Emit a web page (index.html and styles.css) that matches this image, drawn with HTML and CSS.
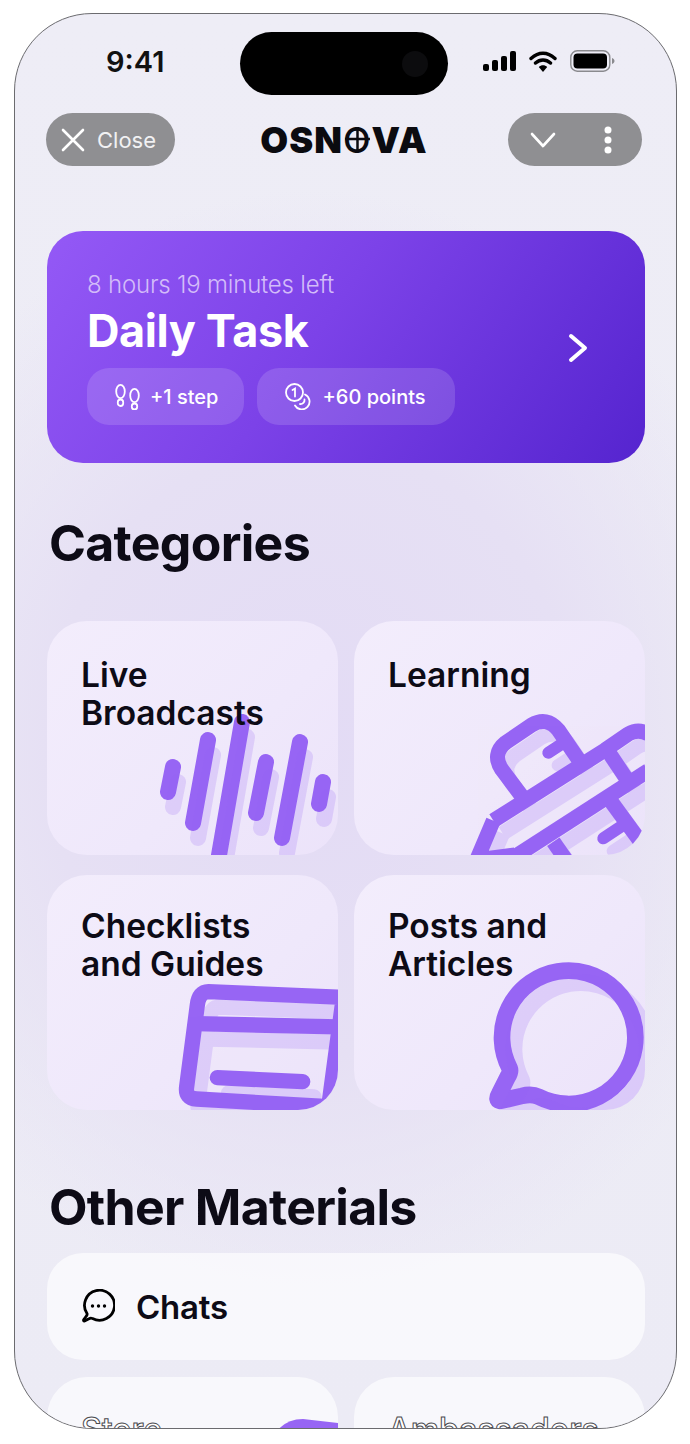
FILE: index.html
```html
<!DOCTYPE html>
<html lang="en">
<head>
    <meta charset="UTF-8">
    <meta name="viewport" content="width=device-width, initial-scale=1.0">
    <title>Osnova</title>
    <link rel="stylesheet" href="styles.css">
</head>
<body>

<div class="phone">
    <div class="status-bar">
        <span class="time">9:41</span>
        <div class="island"><span class="island-lens"></span></div>
        <div class="status-icons">
            <svg width="33" height="20" viewBox="0 0 33 20"><rect x="0" y="13" width="6" height="7" rx="2"/><rect x="9" y="9" width="6" height="11" rx="2"/><rect x="18" y="5" width="6" height="15" rx="2"/><rect x="27" y="0" width="6" height="20" rx="2"/></svg>
            <svg width="28" height="21" viewBox="0 0 28 21"><path d="M2 7.500C9.500 0.500 18.500 0.500 26 7.500M6.500 12C11 8 17 8 21.500 12" fill="none" stroke="#000" stroke-width="3.400" stroke-linecap="round"/><path d="M14 21 9.800 16C12 13.800 16 13.800 18.200 16Z"/></svg>
            <svg width="45" height="22" viewBox="0 0 45 22"><rect x="0.800" y="0.800" width="39" height="20.400" rx="6.500" fill="none" stroke="#8a8a8e" stroke-width="1.400"/><rect x="3.500" y="3.500" width="33.500" height="15" rx="4"/><path d="M42 8v6c1.500-.5 2.500-1.600 2.500-3s-1-2.500-2.500-3Z" fill="#8a8a8e"/></svg>
        </div>
    </div>

    <header class="top-bar">
        <div class="pill-btn close-btn">
            <svg width="24" height="24" viewBox="0 0 24 24"><path d="M2 2 22 22M22 2 2 22" stroke="#fff" stroke-width="2.600" stroke-linecap="round"/></svg>
            <span>Close</span>
        </div>
        <div class="logo">OSN<span class="logo-o">O<svg viewBox="0 0 26 26"><path d="M13 1V25M1 12.500H25" stroke="#0b0b10" stroke-width="2.400"/></svg></span>VA</div>
        <div class="pill-btn menu-btn">
            <svg width="26" height="16" viewBox="0 0 26 16"><path d="M2 2 13 14 24 2" fill="none" stroke="#fff" stroke-width="2.600" stroke-linecap="round" stroke-linejoin="round"/></svg>
            <svg width="10" height="28" viewBox="0 0 10 28"><circle cx="5" cy="4" r="3.500"/><circle cx="5" cy="14" r="3.500"/><circle cx="5" cy="24" r="3.500"/></svg>
        </div>
    </header>

    <section class="task-card">
        <div class="task-info">
            <p class="task-time">8 hours 19 minutes left</p>
            <h1 class="task-title">Daily Task</h1>
            <div class="task-pills">
                <div class="task-pill">
                    <svg width="25" height="26" viewBox="0 0 25 26" fill="none" stroke="#fff" stroke-width="1.800"><ellipse cx="5.500" cy="7.500" rx="4.300" ry="6.600"/><rect x="2.800" y="15.500" width="5.400" height="6.500" rx="2.700"/><ellipse cx="19.500" cy="11.500" rx="4.300" ry="6.600"/><rect x="16.800" y="19.500" width="5.400" height="6" rx="2.700"/></svg>
                    <span>+1 step</span>
                </div>
                <div class="task-pill task-pill-wide">
                    <svg width="27" height="27" viewBox="0 0 27 27" fill="none" stroke="#fff" stroke-width="1.800" stroke-linecap="round"><circle cx="9.500" cy="9.500" r="8.500"/><path d="M7.500 7 10 5.500V13.500"/><path d="M20 11.500A7.800 7.800 0 1 1 10 22.500"/><path d="M19.500 16.500A4 4 0 0 1 15 21"/></svg>
                    <span>+60 points</span>
                </div>
            </div>
        </div>
        <svg class="task-arrow" width="20" height="30" viewBox="0 0 20 30"><path d="M3 3 17 15 3 27" fill="none" stroke="#fff" stroke-width="4" stroke-linecap="round" stroke-linejoin="round"/></svg>
    </section>

    <h2 class="section-title">Categories</h2>
    <div class="cards">
        <div class="cat-card">
            <svg class="cat-art" viewBox="0 0 291 234">
                <path id="bars" d="M126 146 121 171M161 119 146 202M195 101 171 240M219 141 209 192M253 121 235 217M276 161 272 183" fill="none" stroke="#9765f4" stroke-width="16" stroke-linecap="round"/>
                <use href="#bars" x="5" y="15" opacity="0.2"/>
            </svg>
            <h3>Live<br>Broadcasts</h3>
        </div>
        <div class="cat-card">
            <svg class="cat-art" viewBox="27 33 873 702">
                <g id="pencil" fill="none" stroke="#9765f4" stroke-width="45" stroke-linejoin="round" stroke-linecap="butt">
                    <path d="M535 565 470 478Q440 432 482 398L560 345Q605 318 640 360L705 455"/>
                    <path d="M610 428 665 392" stroke-width="36" stroke-linecap="round"/>
                    <path d="M445 632 780 420 850 372Q880 355 910 372"/>
                    <path d="M510 740 910 482"/>
                    <path d="M445 632 395 750 510 735"/>
                    <path d="M790 425 850 515"/>
                    <path d="M795 570 890 700"/>
                    <path d="M625 695 670 760"/>
                    <path d="M775 685 835 645" stroke-width="36" stroke-linecap="round"/>
                </g>
                <use href="#pencil" x="28" y="38" opacity="0.2"/>
            </svg>
            <h3>Learning</h3>
        </div>
        <div class="cat-card cat-card-tall">
            <svg class="cat-art" viewBox="21 30 873 705">
                <g id="sheet" fill="none" stroke="#9765f4" stroke-width="46" stroke-linejoin="round">
                    <path d="M505 380 910 397 866 725 470 702Q435 700 440 665L472 420Q477 380 505 380Z"/>
                    <path d="M470 476 905 486"/>
                    <path d="M532 638 788 650" stroke-linecap="round"/>
                </g>
                <use href="#sheet" x="34" y="46" opacity="0.2"/>
            </svg>
            <h3 class="lifted">Checklists<br>and Guides</h3>
        </div>
        <div class="cat-card cat-card-tall">
            <svg class="cat-art" viewBox="27 30 873 705">
                <path id="bubble" d="M494 610A200 200 0 1 1 580 695Q560 685 530 693L465 708Q452 705 462 688L488 636Q498 620 494 610Z" fill="none" stroke="#9765f4" stroke-width="50" stroke-linejoin="round"/>
                <use href="#bubble" x="36" y="36" opacity="0.2"/>
            </svg>
            <h3 class="lifted">Posts and<br>Articles</h3>
        </div>
    </div>

    <h2 class="section-title other-title">Other Materials</h2>
    <div class="chats-row">
        <svg width="34" height="35" viewBox="0 0 34 35"><path d="M6 24.500A15 15 0 1 1 11.500 29.500Q9.500 28.800 8 29.800L3.500 32Q2 32 2.800 30.500L5 27.500Q6.500 26 6 24.500Z" fill="none" stroke="#000" stroke-width="2.800" stroke-linejoin="round"/><circle cx="11.500" cy="17" r="1.700"/><circle cx="17.500" cy="17" r="1.700"/><circle cx="23.500" cy="17" r="1.700"/></svg>
        <span>Chats</span>
    </div>
    <div class="bottom-cards">
        <div class="bottom-card">
            <svg class="cat-art" viewBox="0 0 291 120"><path d="M226 60Q236 42 256 42L291 46V60Z" fill="#9765f4"/></svg>
            <h3>Store</h3>
        </div>
        <div class="bottom-card">
            <h3>Ambassadors</h3>
        </div>
    </div>
</div>

</body>
</html>
```

FILE: styles.css
```css
* {
    box-sizing: border-box;
}
body {
    margin: 0;
    background: #fff;
    font-family: Inter, "Noto Sans", sans-serif;
    color: #0d0b16;
}
h1, h2, h3, p {
    margin: 0;
}
.phone {
    width: 663px;
    height: 1416px;
    margin: 13px 0 0 14px;
    padding: 0 31px 0 32px;
    border: 1px solid #6b6b6f;
    border-radius: 78px;
    overflow: hidden;
    background: radial-gradient(ellipse 480px 560px at 45% 52%, #e3dbf5 0%, #e6e0f4 55%, rgba(232, 228, 245, 0) 100%), linear-gradient(180deg, #eeedf6 0%, #ecebf5 100%);
}

/* status bar */
.status-bar {
    display: grid;
    grid-template-columns: 1fr 208px 1fr;
    align-items: center;
    height: 63px;
    margin: 18px 4px 0 0;
}
.time {
    padding: 0 0 4px 59px;
    font-size: 29px;
    font-weight: 600;
    color: #111;
}
.island {
    display: flex;
    align-items: center;
    justify-content: flex-end;
    height: 63px;
    padding-right: 20px;
    border-radius: 32px;
    background: #000;
}
.island-lens {
    width: 26px;
    height: 26px;
    border-radius: 50%;
    background: #0c0c0e;
}
.status-icons {
    display: flex;
    align-items: center;
    justify-content: flex-end;
    gap: 13px;
    padding: 0 26px 5px 0;
}

/* top bar */
.top-bar {
    display: grid;
    grid-template-columns: 1fr auto 1fr;
    align-items: center;
    margin: 18px 3px 0 -1px;
}
.pill-btn {
    display: flex;
    align-items: center;
    height: 53px;
    border-radius: 27px;
    background: #8f8f92;
    color: #f1f1f3;
    font-size: 22px;
}
.close-btn {
    width: 129px;
    gap: 12px;
    padding-left: 15px;
}
.menu-btn {
    justify-self: end;
    justify-content: space-between;
    width: 134px;
    padding: 0 29px 0 22px;
    fill: #fff;
}
.logo {
    font-size: 36px;
    font-weight: 900;
    letter-spacing: 1px;
    color: #0b0b10;
}
.logo-o {
    position: relative;
    font-weight: 500;
}
.logo-o svg {
    position: absolute;
    left: 1px;
    top: 8px;
    width: 27px;
    height: 27px;
}

/* daily task */
.task-card {
    display: flex;
    align-items: center;
    justify-content: space-between;
    height: 232px;
    margin-top: 65px;
    padding: 39px 57px 38px 40px;
    border-radius: 36px;
    background: linear-gradient(125deg, #9459f6 0%, #7c42e8 45%, #5524cf 100%);
    color: #fff;
}
.task-time {
    font-size: 24px;
    line-height: 30px;
    font-weight: 300;
    letter-spacing: -0.2px;
    color: #d3bcf9;
}
.task-title {
    margin: 4px 0 10px;
    font-size: 45px;
    line-height: 54px;
    font-weight: 700;
    letter-spacing: -0.4px;
}
.task-pills {
    display: flex;
    gap: 13px;
}
.task-pill {
    display: flex;
    align-items: center;
    gap: 10px;
    height: 57px;
    padding: 0 26px 0 28px;
    border-radius: 22px;
    background: rgba(255, 255, 255, 0.14);
    font-size: 20px;
    font-weight: 500;
}
.task-pill-wide {
    padding-right: 29px;
}

/* categories */
.section-title {
    margin: 52px 0 50px 2px;
    font-size: 50px;
    line-height: 56px;
    font-weight: 700;
    letter-spacing: -0.7px;
}
.cards {
    display: grid;
    grid-template-columns: 291px 291px;
    grid-template-rows: 234px 235px;
    gap: 20px 16px;
}
.cat-card, .bottom-card {
    position: relative;
    padding: 35px 34px 0;
    border-radius: 40px;
    overflow: hidden;
}
.cat-card {
    background: linear-gradient(135deg, #f3edfc 0%, #efe8fb 60%, #ece3fa 100%);
}
.cat-card h3, .bottom-card h3 {
    position: relative;
    font-size: 33.5px;
    line-height: 38px;
    font-weight: 600;
}
.cat-card h3.lifted {
    margin-top: -3px;
}
.cat-art {
    position: absolute;
    left: 0;
    top: 0;
    width: 100%;
    height: 100%;
}

/* other materials */
.other-title {
    margin: 69px 0 18px 2px;
}
.chats-row {
    display: flex;
    align-items: center;
    gap: 21px;
    height: 107px;
    padding-left: 34px;
    border-radius: 36px;
    background: rgba(255, 255, 255, 0.65);
    font-size: 33px;
    font-weight: 600;
    letter-spacing: -0.2px;
}
.bottom-cards {
    display: grid;
    grid-template-columns: 291px 291px;
    gap: 16px;
    margin-top: 17px;
}
.bottom-card {
    height: 120px;
    padding-top: 34px;
    background: rgba(255, 255, 255, 0.65);
}
.bottom-card h3 {
    font-size: 32px;
    font-weight: 500;
    color: #fff;
    -webkit-text-stroke: 1px #4a4a4f;
}
```
